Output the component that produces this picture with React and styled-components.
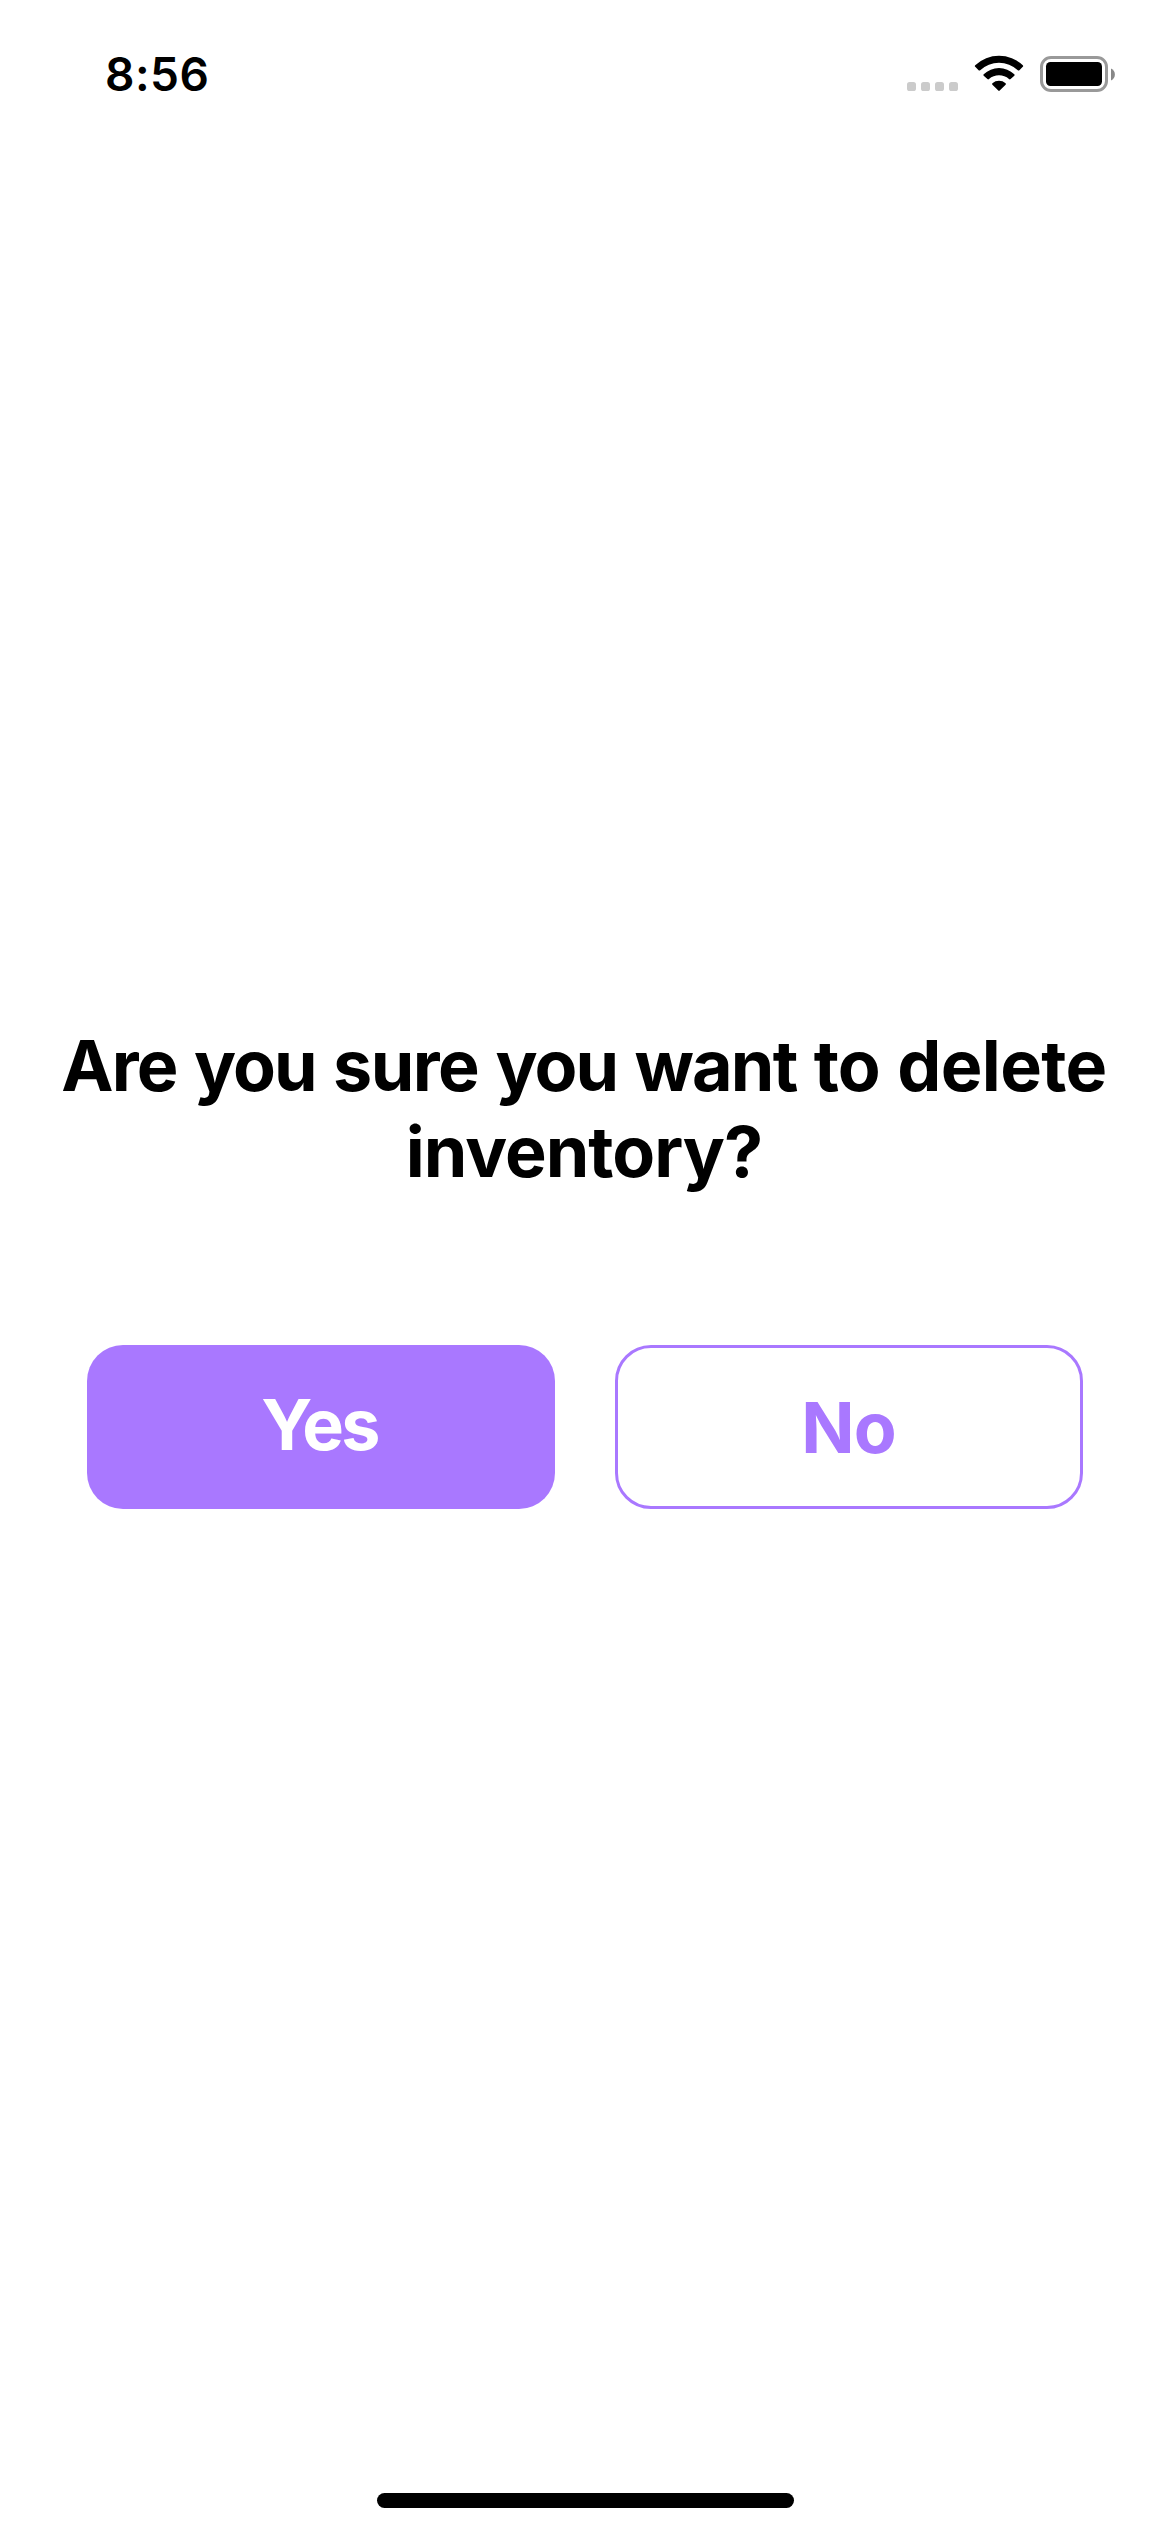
import React, { Fragment } from "react";
import styled, { createGlobalStyle } from "styled-components";

const GlobalStyle = createGlobalStyle`
  * { box-sizing: border-box; }
  body { margin: 0; background: #fff; }
`;

const Screen = styled.div`
  width: 1170px;
  height: 2532px;
  display: flex;
  flex-direction: column;
  background: #fff;
  color: #000;
  font-family: Inter, "Liberation Sans", sans-serif;
`;

const StatusBar = styled.header`
  height: 141px;
  padding: 46px 55px 0 105px;
  display: flex;
  justify-content: space-between;
  align-items: flex-start;
`;

const Time = styled.time`
  font-size: 46px;
  line-height: 56px;
  font-weight: 560;
  letter-spacing: 0.5px;
`;

const StatusIcons = styled.svg`
  width: 208px;
  height: 40px;
  margin-top: 8px;
  display: block;
`;

const Dialog = styled.main`
  flex: 1;
  display: flex;
  flex-direction: column;
  padding-top: 882px;
`;

const Question = styled.h1`
  margin: 0 0 150px;
  padding-right: 2px;
  text-align: center;
  font-size: 70px;
  line-height: 86px;
  font-weight: 700;
  word-spacing: 0.7px;
`;

const Word = styled.span`
  letter-spacing: ${(p) => p.$tracking}px;
`;

const Actions = styled.div`
  display: flex;
  gap: 60px;
  padding: 0 87px;
`;

const ActionButton = styled.button`
  width: 468px;
  height: 164px;
  border-radius: 36px;
  border: ${(p) => (p.$outlined ? "3px solid #a978ff" : "0")};
  background: ${(p) => (p.$outlined ? "transparent" : "#a978ff")};
  color: ${(p) => (p.$outlined ? "#a978ff" : "#fff")};
  padding: ${(p) => (p.$outlined ? "2px 1px 0 0" : "0 3px 4px 0")};
  font: 700 70px/86px Inter, "Liberation Sans", sans-serif;
  letter-spacing: ${(p) => p.$tracking}px;
`;

const Footer = styled.footer`
  display: flex;
  justify-content: center;
  padding: 0 0 24px 1px;
`;

const HomeIndicator = styled.div`
  width: 417px;
  height: 15px;
  border-radius: 8px;
  background: #000;
`;

const questionLines = [
  [
    ["Are", -1.8],
    ["you", -1.9],
    ["sure", -1.5],
    ["you", -1.9],
    ["want", -1.8],
    ["to", -0.9],
    ["delete", -0.6],
  ],
  [["inventory?", -0.97]],
];

function StatusGlyphs() {
  return (
    <StatusIcons viewBox="907 54 208 40" aria-label="Wi-Fi connected, battery full">
      {[907, 921, 935, 949].map((x) => (
        <rect key={x} x={x} y="82" width="9" height="9" rx="2.6" fill="#cbcbcb" />
      ))}
      <path d="M975.2 65.2 Q974.4 66 975.2 66.8 L978.6 70.2 Q979.4 70.9 980.2 70.2 A27.5 27.5 0 0 1 1017.8 70.2 Q1018.6 70.9 1019.4 70.2 L1022.8 66.8 Q1023.6 66 1022.8 65.2 A34.5 34.5 0 0 0 975.2 65.2Z" />
      <path d="M983.7 74.2 Q982.9 75 983.7 75.8 L987.4 79.1 Q988.2 79.8 989 79.1 A15.2 15.2 0 0 1 1009 79.1 Q1009.8 79.8 1010.6 79.1 L1014.3 75.8 Q1015.1 75 1014.3 74.2 A22.3 22.3 0 0 0 983.7 74.2Z" />
      <path d="M992.4 83.2 Q991.7 84 992.4 84.7 L998.3 90.6 Q999 91.2 999.7 90.6 L1005.6 84.7 Q1006.3 84 1005.6 83.2 A10 10 0 0 0 992.4 83.2Z" />
      <rect x="1041.5" y="57.5" width="65" height="33" rx="9.5" fill="none" stroke="#999" strokeWidth="3" />
      <rect x="1046" y="62" width="56" height="24" rx="4.5" />
      <path d="M1111 68.5 A6.6 6.6 0 0 1 1111 80.5Z" fill="#888" />
    </StatusIcons>
  );
}

export default function App() {
  return (
    <>
      <GlobalStyle />
      <Screen>
        <StatusBar>
          <Time>8:56</Time>
          <StatusGlyphs />
        </StatusBar>
        <Dialog>
          <Question>
            {questionLines.map((line, row) => (
              <Fragment key={row}>
                {row > 0 && <br />}
                {line.map(([word, tracking], i) => (
                  <Fragment key={i}>
                    {i > 0 && " "}
                    <Word $tracking={tracking}>{word}</Word>
                  </Fragment>
                ))}
              </Fragment>
            ))}
          </Question>
          <Actions>
            <ActionButton $tracking={-2.7}>Yes</ActionButton>
            <ActionButton $tracking={-1} $outlined>
              No
            </ActionButton>
          </Actions>
        </Dialog>
        <Footer>
          <HomeIndicator />
        </Footer>
      </Screen>
    </>
  );
}
